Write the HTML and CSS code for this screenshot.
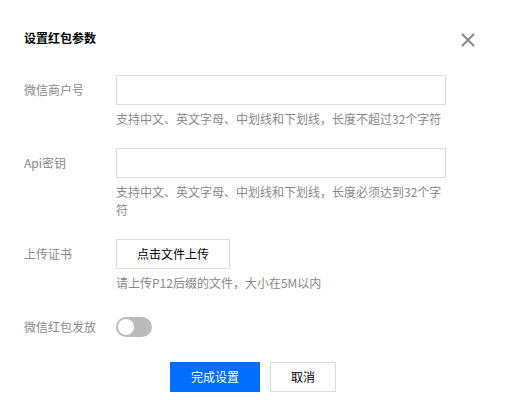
FILE: index.html
```html
<!DOCTYPE html>
<html lang="zh-CN">
<head>
  <meta charset="UTF-8">
  <title>设置红包参数</title>
  <link rel="stylesheet" href="styles.css">
</head>
<body>

<div class="dialog">
  <div class="dialog_head">
    <h4>设置红包参数</h4>
    <a href="#" class="btn_close" title="关闭">
      <svg width="14" height="14" viewBox="0 0 14 14">
        <path d="M1 1L13 13M13 1L1 13" stroke="#888" stroke-width="2" fill="none"/>
      </svg>
    </a>
  </div>

  <form class="form">
    <!-- 商户号 -->
    <div class="form_item">
      <label class="form_label" for="mchId">微信商户号</label>
      <div class="form_ctrl">
        <input type="text" id="mchId" class="input">
        <p class="form_hint">支持中文、英文字母、中划线和下划线，长度不超过32个字符</p>
      </div>
    </div>

    <!-- 密钥 -->
    <div class="form_item">
      <label class="form_label" for="apiKey">Api密钥</label>
      <div class="form_ctrl">
        <input type="text" id="apiKey" class="input">
        <p class="form_hint">支持中文、英文字母、中划线和下划线，长度必须达到32个字符</p>
      </div>
    </div>

    <!-- 证书 -->
    <div class="form_item">
      <label class="form_label">上传证书</label>
      <div class="form_ctrl">
        <button type="button" class="btn">点击文件上传</button>
        <p class="form_hint">请上传P12后缀的文件，大小在5M以内</p>
      </div>
    </div>

    <!-- 开关 -->
    <div class="form_item">
      <label class="form_label">微信红包发放</label>
      <div class="form_ctrl switch_wrap">
        <span class="switch"></span>
      </div>
    </div>

    <div class="dialog_foot">
      <button type="button" class="btn btn_primary">完成设置</button>
      <button type="button" class="btn">取消</button>
    </div>
  </form>
</div>

</body>
</html>
```

FILE: styles.css
```css
body { margin: 0; font-family: "Noto Sans CJK SC", "Noto Sans", sans-serif; font-size: 12px; color: #000; background: #fff; }
.dialog { padding: 28px 24px 0; }
.dialog_head { display: flex; justify-content: space-between; align-items: flex-start; height: 20px; }
.dialog_head h4 { margin: 0; font-size: 12px; line-height: 20px; font-weight: bold; }
.btn_close { display: block; width: 14px; height: 14px; margin: 5px 7px 0 0; }
.btn_close svg { display: block; }
.form { margin-top: 27px; }
.form_item { display: flex; margin-bottom: 20px; }
.form_label { width: 92px; flex: none; line-height: 30px; color: #888; }
.form_ctrl { width: 330px; }
.input { display: block; box-sizing: border-box; width: 330px; height: 30px; margin: 0; border: 1px solid #ddd; padding: 0 8px; font: inherit; outline: none; }
.form_hint { margin: 5px 0 0; line-height: 18px; color: #888; }
.switch_wrap { display: flex; align-items: center; height: 30px; }
.switch { position: relative; display: block; width: 36px; height: 20px; border-radius: 10px; background: #bbb; }
.switch::after { content: ""; position: absolute; left: 2px; top: 2px; width: 16px; height: 16px; border-radius: 50%; background: #fff; }
.btn { box-sizing: border-box; height: 30px; padding: 0 20px; border: 1px solid #ddd; background: #fff; color: #000; font: inherit; line-height: 28px; cursor: pointer; }
.btn_primary { background: #006eff; border-color: #006eff; color: #fff; }
.dialog_foot { display: flex; justify-content: center; gap: 10px; margin-top: 20px; }
```
